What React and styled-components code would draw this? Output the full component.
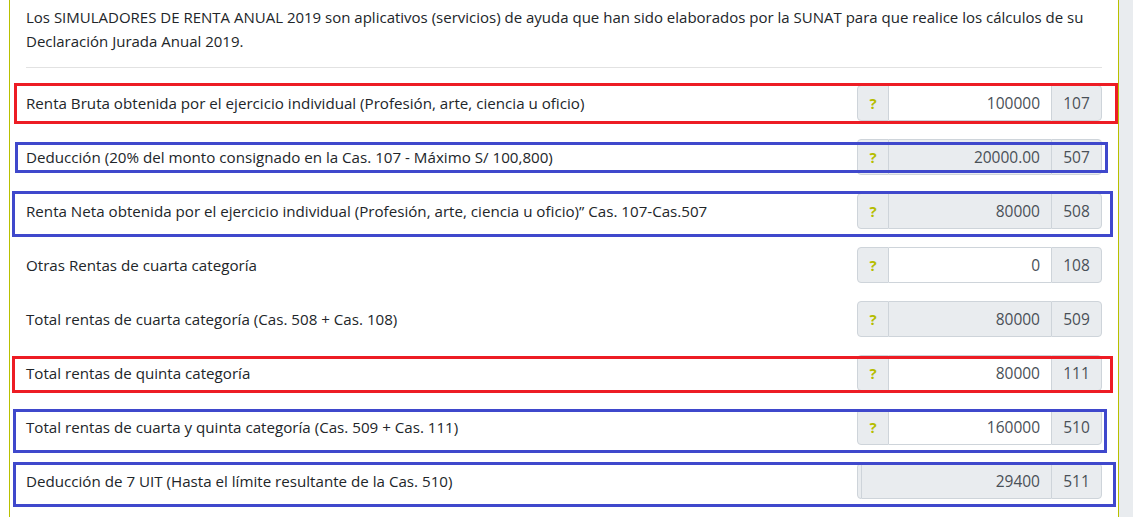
import React from "react";
import styled, { createGlobalStyle } from "styled-components";

const GlobalStyle = createGlobalStyle`
  body {
    margin: 0;
    background: #ffffff;
    font-family: "Open Sans", "Noto Sans", sans-serif;
    color: #212529;
  }
`;

const Page = styled.div`
  display: flex;
  width: 1133px;
  height: 517px;
  overflow: hidden;
`;

const Gutter = styled.div`
  width: 9px;
`;

const Panel = styled.div`
  box-sizing: border-box;
  width: 1110px;
  border-left: 1px solid #b8c000;
  border-right: 1px solid #b8c000;
  padding: 5px 16px 0 16px;
`;

const Side = styled.div`
  flex: 1;
  background: #e9ecef;
`;

const Intro = styled.p`
  margin: 0;
  font-size: 15px;
  line-height: 24px;
`;

const Divider = styled.hr`
  border: 0;
  border-top: 1px solid #e2e2e2;
  margin: 14px 0 8px;
`;

const Row = styled.div`
  position: relative;
  display: flex;
  align-items: center;
  justify-content: space-between;
  height: 54px;
`;

const Label = styled.span`
  font-size: 15.15px;
`;

const Group = styled.div`
  display: flex;
  width: 245px;
  height: 36px;
`;

const Help = styled.span`
  display: flex;
  align-items: center;
  justify-content: center;
  width: ${(p) => (p.$empty ? "3px" : "30px")};
  background: #e9ecef;
  border: 1px solid #ced4da;
  border-radius: 4px 0 0 4px;
  color: #b5bd00;
  font-weight: 700;
  font-size: 15px;
`;

const Field = styled.div`
  flex: 1;
  display: flex;
  align-items: center;
  justify-content: flex-end;
  padding: 0 11px;
  background: ${(p) => (p.$readOnly ? "#e9ecef" : "#ffffff")};
  border-top: 1px solid #ced4da;
  border-bottom: 1px solid #ced4da;
  color: #495057;
  font-size: 15.5px;
`;

const Code = styled.span`
  display: flex;
  align-items: center;
  justify-content: center;
  width: 49px;
  background: #e9ecef;
  border: 1px solid #ced4da;
  border-radius: 0 4px 4px 0;
  color: #495057;
  font-size: 15.5px;
`;

const Mark = styled.div`
  position: absolute;
  box-sizing: border-box;
  border: 3px solid ${(p) => (p.$red ? "#ed1c24" : "#3f48cc")};
  pointer-events: none;
`;

const rows = [
  {
    label: "Renta Bruta obtenida por el ejercicio individual (Profesión, arte, ciencia u oficio)",
    value: "100000",
    code: "107",
    mark: { red: true, top: 7, left: 14, right: 1118, height: 41 },
  },
  {
    label: "Deducción (20% del monto consignado en la Cas. 107 - Máximo S/ 100,800)",
    value: "20000.00",
    code: "507",
    readOnly: true,
    mark: { top: 12, left: 15, right: 1108, height: 31 },
  },
  {
    label: "Renta Neta obtenida por el ejercicio individual (Profesión, arte, ciencia u oficio)” Cas. 107-Cas.507",
    value: "80000",
    code: "508",
    readOnly: true,
    mark: { top: 7, left: 12, right: 1113, height: 46 },
  },
  { label: "Otras Rentas de cuarta categoría", value: "0", code: "108" },
  {
    label: "Total rentas de cuarta categoría (Cas. 508 + Cas. 108)",
    value: "80000",
    code: "509",
    readOnly: true,
  },
  {
    label: "Total rentas de quinta categoría",
    value: "80000",
    code: "111",
    mark: { red: true, top: 10, left: 12, right: 1113, height: 37 },
  },
  {
    label: "Total rentas de cuarta y quinta categoría (Cas. 509 + Cas. 111)",
    value: "160000",
    code: "510",
    mark: { top: 9, left: 13, right: 1107, height: 44 },
  },
  {
    label: "Deducción de 7 UIT (Hasta el límite resultante de la Cas. 510)",
    value: "29400",
    code: "511",
    readOnly: true,
    noHelp: true,
    mark: { top: 8, left: 13, right: 1116, height: 45 },
  },
];

const App = () => {
  return (
    <Page>
      <GlobalStyle />
      <Gutter />
      <Panel>
        <Intro>
          Los SIMULADORES DE RENTA ANUAL 2019 son aplicativos (servicios) de ayuda que han sido
          elaborados por la SUNAT para que realice los cálculos de su Declaración Jurada Anual 2019.
        </Intro>
        <Divider />
        {rows.map((r) => (
          <Row key={r.code}>
            <Label>{r.label}</Label>
            <Group>
              <Help $empty={r.noHelp}>{r.noHelp ? "" : "?"}</Help>
              <Field $readOnly={r.readOnly}>{r.value}</Field>
              <Code>{r.code}</Code>
            </Group>
            {r.mark && (
              <Mark
                $red={r.mark.red}
                style={{
                  top: r.mark.top,
                  left: r.mark.left - 26,
                  width: r.mark.right - r.mark.left,
                  height: r.mark.height,
                }}
              />
            )}
          </Row>
        ))}
      </Panel>
      <Side />
    </Page>
  );
};

export default App;
